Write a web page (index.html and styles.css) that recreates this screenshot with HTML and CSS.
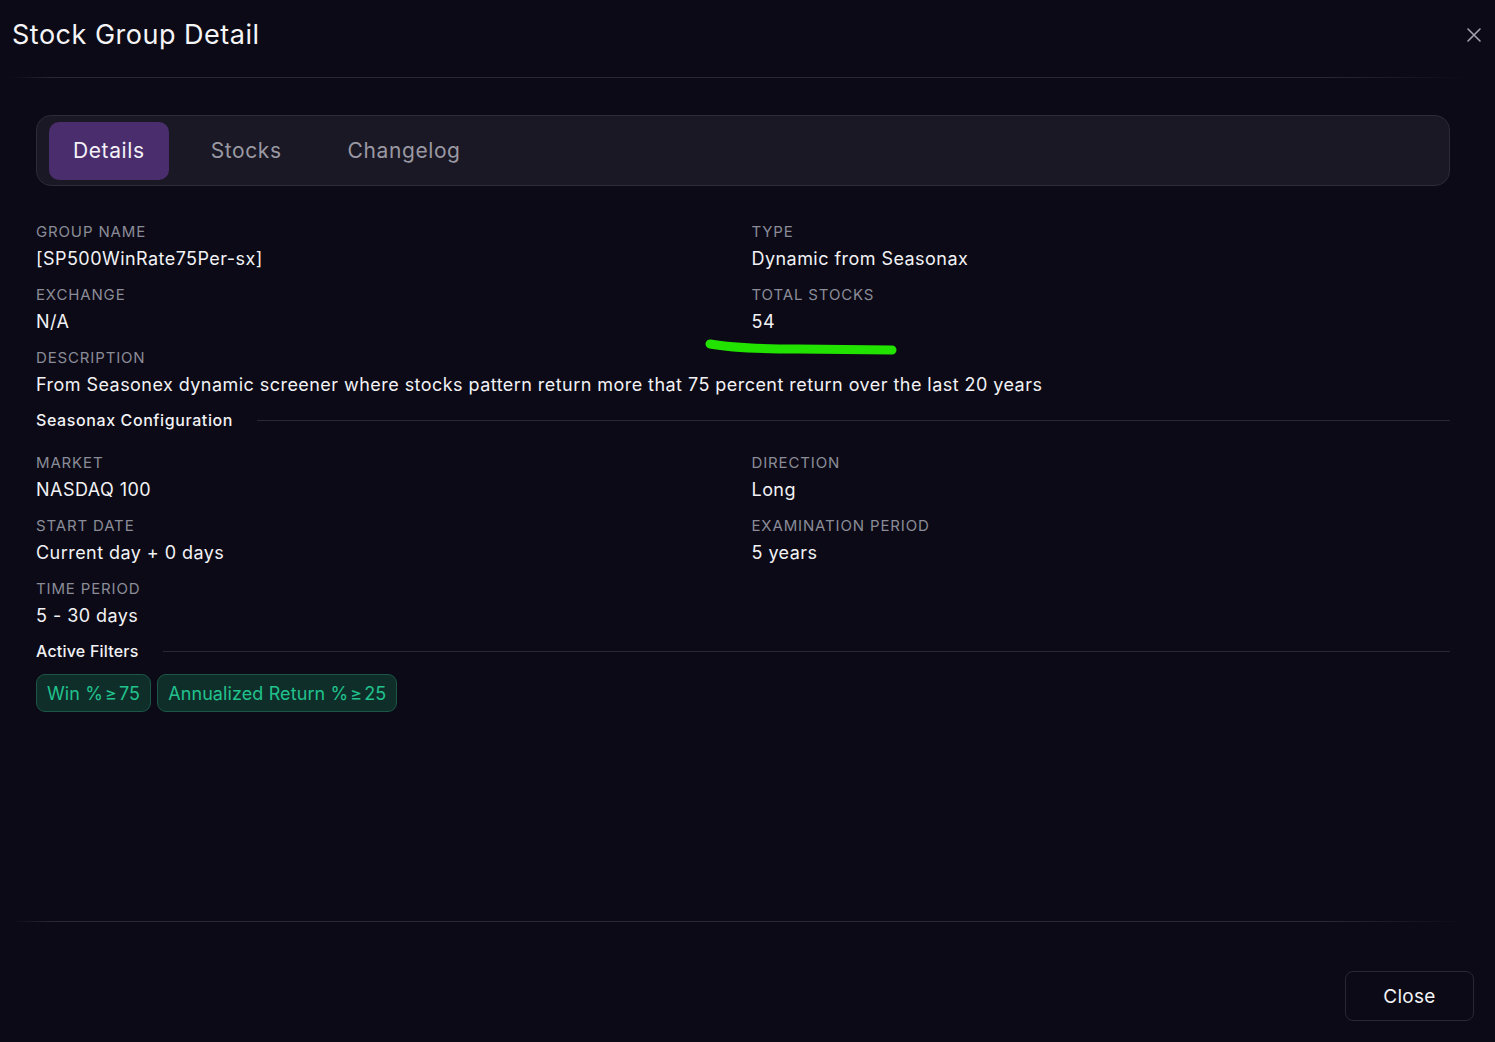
FILE: index.html
```html
<!DOCTYPE html>
<html lang="en">
<head>
<meta charset="utf-8">
<title>Stock Group Detail</title>
<link rel="stylesheet" href="styles.css">
</head>
<body>
<div class="modal">
  <header class="modal-header">
    <h1 class="modal-title">Stock Group Detail</h1>
    <button class="icon-close" aria-label="Close">
      <svg width="16" height="16" viewBox="0 0 16 16"><path d="M2 2 L14 14 M14 2 L2 14" stroke="#a3a3ad" stroke-width="1.6" stroke-linecap="round"/></svg>
    </button>
  </header>
  <div class="divider"></div>

  <main class="modal-body">
    <nav class="tabs">
      <div class="tab active">Details</div>
      <div class="tab">Stocks</div>
      <div class="tab">Changelog</div>
    </nav>

    <section class="fields">
      <div class="field"><div class="label">Group Name</div><div class="value">[SP500WinRate75Per-sx]</div></div>
      <div class="field"><div class="label">Type</div><div class="value">Dynamic from Seasonax</div></div>
      <div class="field"><div class="label">Exchange</div><div class="value">N/A</div></div>
      <div class="field"><div class="label">Total Stocks</div><div class="value">54</div></div>
      <div class="field wide"><div class="label">Description</div><div class="value">From Seasonex dynamic screener where stocks pattern return more that 75 percent return over the last 20 years</div></div>

      <div class="section-title wide"><span>Seasonax Configuration</span><div class="rule"></div></div>

      <div class="field"><div class="label">Market</div><div class="value">NASDAQ 100</div></div>
      <div class="field"><div class="label">Direction</div><div class="value">Long</div></div>
      <div class="field"><div class="label">Start Date</div><div class="value">Current day + 0 days</div></div>
      <div class="field"><div class="label">Examination Period</div><div class="value">5 years</div></div>
      <div class="field"><div class="label">Time Period</div><div class="value">5 - 30 days</div></div>
      <div class="field"></div>

      <div class="section-title wide filters-title"><span>Active Filters</span><div class="rule"></div></div>
      <div class="chips wide">
        <span class="chip">Win %<span class="ge">≥</span>75</span>
        <span class="chip">Annualized Return %<span class="ge">≥</span>25</span>
      </div>
    </section>
  </main>

  <div class="divider footer-divider"></div>
  <footer class="modal-footer">
    <button class="btn-close">Close</button>
  </footer>

  <svg class="annotation" width="220" height="30" viewBox="0 0 220 30"><path d="M12 10 Q 40 15 100 15 L 194 16" fill="none" stroke="#22e300" stroke-width="9" stroke-linecap="round"/></svg>
</div>
</body>
</html>
```

FILE: styles.css
```css
* { box-sizing: border-box; }
html, body { margin: 0; padding: 0; }
body {
  background: #0c0a16;
  color: #f2f2f5;
  font-family: Inter, "Open Sans", "Liberation Sans", sans-serif;
}
.modal {
  position: relative;
  width: 1495px;
  height: 1042px;
  display: flex;
  flex-direction: column;
}
.modal-header {
  height: 77px;
  display: flex;
  align-items: center;
  justify-content: space-between;
  padding: 0 13px 8px 12px;
}
.modal-title {
  margin: 0;
  font-size: 27px;
  font-weight: 400;
  letter-spacing: 0.5px;
  color: #f5f5f7;
}
.icon-close {
  background: none;
  border: 0;
  padding: 0;
  width: 16px;
  height: 16px;
  display: flex;
}
.divider {
  height: 1px;
  margin: 0 28px 0 10px;
  background: linear-gradient(90deg, rgba(42,40,54,0) 0%, #2a2836 3%, #2a2836 90%, rgba(42,40,54,0) 100%);
}
.modal-body {
  flex: 1;
  padding: 37px 45px 0 36px;
}
.tabs {
  height: 71px;
  display: flex;
  align-items: center;
  gap: 18px;
  padding: 0 12px;
  background: #1a1824;
  border: 1px solid #2d2b39;
  border-radius: 15px;
}
.tab {
  height: 58px;
  padding: 0 24px;
  display: flex;
  align-items: center;
  font-size: 21px;
  letter-spacing: 0.6px;
  color: #9a99a3;
  border-radius: 10px;
}
.tab.active {
  background: #4a2d6d;
  color: #f4f2f8;
}
.fields {
  margin-top: 35px;
  display: grid;
  grid-template-columns: 1fr 1fr;
  column-gap: 17px;
  row-gap: 11px;
}
.wide { grid-column: 1 / -1; }
.label {
  font-size: 15px;
  line-height: 22px;
  text-transform: uppercase;
  color: #8a8c98;
  letter-spacing: 0.85px;
}
.value {
  margin-top: 2px;
  font-size: 18px;
  line-height: 28px;
  letter-spacing: 0.45px;
  color: #f2f2f5;
}
.section-title {
  margin-top: -2px;
  margin-bottom: 9px;
  display: flex;
  align-items: center;
  gap: 24px;
  font-size: 16px;
  line-height: 24px;
  font-weight: 500;
  letter-spacing: 0.6px;
  color: #f2f2f5;
}
.section-title .rule {
  flex: 1;
  height: 1px;
  background: #2a2836;
}
.filters-title { margin-bottom: 0; letter-spacing: 0.2px; }
.chips {
  display: flex;
  gap: 6px;
}
.chip {
  height: 38px;
  padding: 0 10px;
  display: inline-flex;
  align-items: center;
  font-size: 18px;
  letter-spacing: 0.1px;
  color: #21c28d;
  background: #0f2e2a;
  border: 1px solid #1b5646;
  border-radius: 9px;
}
.ge { margin: 0 2px; }
.btn-close {
  width: 129px;
  height: 50px;
  background: transparent;
  border: 1px solid #2a2835;
  border-radius: 8px;
  color: #f2f2f5;
  font-family: inherit;
  font-size: 19px;
  letter-spacing: 0.3px;
}
.modal-footer {
  height: 120px;
  display: flex;
  justify-content: flex-end;
  align-items: flex-end;
  padding: 0 21px 21px 0;
}
.annotation {
  position: absolute;
  left: 698px;
  top: 334px;
}
```
